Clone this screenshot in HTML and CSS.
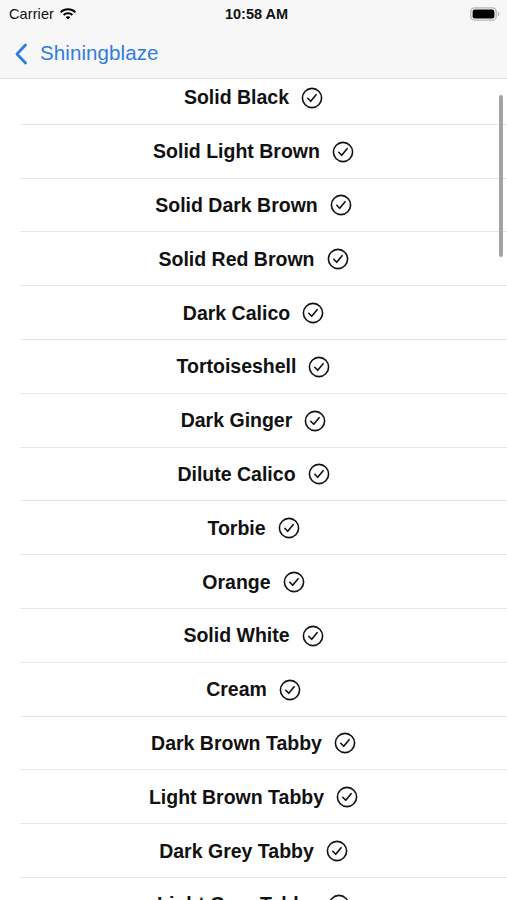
FILE: index.html
```html
<!DOCTYPE html>
<html>
<head>
<meta charset="utf-8">
<link rel="stylesheet" href="styles.css">
</head>
<body>
<div class="screen">
  <header class="header">
    <div class="status">
      <div class="status-left">
        <span class="carrier">Carrier</span>
        <svg class="wifi" width="18" height="13" viewBox="0 0 18 13">
          <path d="M9 1.2c3.1 0 5.9 1.2 8 3.2l-1.5 1.5C13.8 4.3 11.5 3.3 9 3.3S4.2 4.3 2.5 5.9L1 4.4c2.1-2 4.9-3.2 8-3.2z" fill="#000"/>
          <path d="M9 5.2c2 0 3.8.8 5.1 2l-1.5 1.5C11.6 7.8 10.4 7.3 9 7.3s-2.6.5-3.6 1.4L3.9 7.2c1.3-1.2 3.1-2 5.1-2z" fill="#000"/>
          <path d="M9 9.2c.9 0 1.700.3 2.3.9L9 12.4 6.7 10.1c.6-.6 1.4-.9 2.3-.9z" fill="#000"/>
        </svg>
      </div>
      <span class="time">10:58 AM</span>
      <div class="status-right">
        <svg width="30" height="14" viewBox="0 0 30 14">
          <rect x="0.8" y="0.8" width="25.4" height="12.4" rx="3.8" fill="none" stroke="#b5b5b5" stroke-width="1.3"/>
          <rect x="2.6" y="2.6" width="21.8" height="8.8" rx="2.2" fill="#000"/>
          <path d="M27.8 4.8c1 .3 1.6 1.1 1.6 2.2s-.6 1.9-1.6 2.2z" fill="#b5b5b5"/>
        </svg>
      </div>
    </div>
    <nav class="nav">
      <svg class="chev" width="14" height="22" viewBox="0 0 14 22">
        <path d="M11.5 2 L3 11 L11.5 20" fill="none" stroke="#2f7de1" stroke-width="2.8" stroke-linecap="round" stroke-linejoin="round"/>
      </svg>
      <span class="back-label">Shiningblaze</span>
    </nav>
  </header>
  <ul class="list">
    <li class="row"><span>Solid Black</span><svg class="check" viewBox="0 0 22 22"><circle cx="11" cy="11" r="9.6" fill="none" stroke="#111" stroke-width="1.6"/><path d="M6.8 11.3l2.9 3 5.4-6.6" fill="none" stroke="#111" stroke-width="1.6" stroke-linecap="round" stroke-linejoin="round"/></svg></li>
    <li class="row"><span>Solid Light Brown</span><svg class="check" viewBox="0 0 22 22"><circle cx="11" cy="11" r="9.6" fill="none" stroke="#111" stroke-width="1.6"/><path d="M6.8 11.3l2.9 3 5.4-6.6" fill="none" stroke="#111" stroke-width="1.6" stroke-linecap="round" stroke-linejoin="round"/></svg></li>
    <li class="row"><span>Solid Dark Brown</span><svg class="check" viewBox="0 0 22 22"><circle cx="11" cy="11" r="9.6" fill="none" stroke="#111" stroke-width="1.6"/><path d="M6.8 11.3l2.9 3 5.4-6.6" fill="none" stroke="#111" stroke-width="1.6" stroke-linecap="round" stroke-linejoin="round"/></svg></li>
    <li class="row"><span>Solid Red Brown</span><svg class="check" viewBox="0 0 22 22"><circle cx="11" cy="11" r="9.6" fill="none" stroke="#111" stroke-width="1.6"/><path d="M6.8 11.3l2.9 3 5.4-6.6" fill="none" stroke="#111" stroke-width="1.6" stroke-linecap="round" stroke-linejoin="round"/></svg></li>
    <li class="row"><span>Dark Calico</span><svg class="check" viewBox="0 0 22 22"><circle cx="11" cy="11" r="9.6" fill="none" stroke="#111" stroke-width="1.6"/><path d="M6.8 11.3l2.9 3 5.4-6.6" fill="none" stroke="#111" stroke-width="1.6" stroke-linecap="round" stroke-linejoin="round"/></svg></li>
    <li class="row"><span>Tortoiseshell</span><svg class="check" viewBox="0 0 22 22"><circle cx="11" cy="11" r="9.6" fill="none" stroke="#111" stroke-width="1.6"/><path d="M6.8 11.3l2.9 3 5.4-6.6" fill="none" stroke="#111" stroke-width="1.6" stroke-linecap="round" stroke-linejoin="round"/></svg></li>
    <li class="row"><span>Dark Ginger</span><svg class="check" viewBox="0 0 22 22"><circle cx="11" cy="11" r="9.6" fill="none" stroke="#111" stroke-width="1.6"/><path d="M6.8 11.3l2.9 3 5.4-6.6" fill="none" stroke="#111" stroke-width="1.6" stroke-linecap="round" stroke-linejoin="round"/></svg></li>
    <li class="row"><span>Dilute Calico</span><svg class="check" viewBox="0 0 22 22"><circle cx="11" cy="11" r="9.6" fill="none" stroke="#111" stroke-width="1.6"/><path d="M6.8 11.3l2.9 3 5.4-6.6" fill="none" stroke="#111" stroke-width="1.6" stroke-linecap="round" stroke-linejoin="round"/></svg></li>
    <li class="row"><span>Torbie</span><svg class="check" viewBox="0 0 22 22"><circle cx="11" cy="11" r="9.6" fill="none" stroke="#111" stroke-width="1.6"/><path d="M6.8 11.3l2.9 3 5.4-6.6" fill="none" stroke="#111" stroke-width="1.6" stroke-linecap="round" stroke-linejoin="round"/></svg></li>
    <li class="row"><span>Orange</span><svg class="check" viewBox="0 0 22 22"><circle cx="11" cy="11" r="9.6" fill="none" stroke="#111" stroke-width="1.6"/><path d="M6.8 11.3l2.9 3 5.4-6.6" fill="none" stroke="#111" stroke-width="1.6" stroke-linecap="round" stroke-linejoin="round"/></svg></li>
    <li class="row"><span>Solid White</span><svg class="check" viewBox="0 0 22 22"><circle cx="11" cy="11" r="9.6" fill="none" stroke="#111" stroke-width="1.6"/><path d="M6.8 11.3l2.9 3 5.4-6.6" fill="none" stroke="#111" stroke-width="1.6" stroke-linecap="round" stroke-linejoin="round"/></svg></li>
    <li class="row"><span>Cream</span><svg class="check" viewBox="0 0 22 22"><circle cx="11" cy="11" r="9.6" fill="none" stroke="#111" stroke-width="1.6"/><path d="M6.8 11.3l2.9 3 5.4-6.6" fill="none" stroke="#111" stroke-width="1.6" stroke-linecap="round" stroke-linejoin="round"/></svg></li>
    <li class="row"><span>Dark Brown Tabby</span><svg class="check" viewBox="0 0 22 22"><circle cx="11" cy="11" r="9.6" fill="none" stroke="#111" stroke-width="1.6"/><path d="M6.8 11.3l2.9 3 5.4-6.6" fill="none" stroke="#111" stroke-width="1.6" stroke-linecap="round" stroke-linejoin="round"/></svg></li>
    <li class="row"><span>Light Brown Tabby</span><svg class="check" viewBox="0 0 22 22"><circle cx="11" cy="11" r="9.6" fill="none" stroke="#111" stroke-width="1.6"/><path d="M6.8 11.3l2.9 3 5.4-6.6" fill="none" stroke="#111" stroke-width="1.6" stroke-linecap="round" stroke-linejoin="round"/></svg></li>
    <li class="row"><span>Dark Grey Tabby</span><svg class="check" viewBox="0 0 22 22"><circle cx="11" cy="11" r="9.6" fill="none" stroke="#111" stroke-width="1.6"/><path d="M6.8 11.3l2.9 3 5.4-6.6" fill="none" stroke="#111" stroke-width="1.6" stroke-linecap="round" stroke-linejoin="round"/></svg></li>
    <li class="row"><span>Light Grey Tabby</span><svg class="check" viewBox="0 0 22 22"><circle cx="11" cy="11" r="9.6" fill="none" stroke="#111" stroke-width="1.6"/><path d="M6.8 11.3l2.9 3 5.4-6.6" fill="none" stroke="#111" stroke-width="1.6" stroke-linecap="round" stroke-linejoin="round"/></svg></li>
  </ul>
  <div class="scrollbar"></div>
</div>
</body>
</html>
```

FILE: styles.css
```css
* { box-sizing: border-box; }
html, body {
  margin: 0;
  padding: 0;
  background: #fff;
}
body {
  font-family: "Liberation Sans", Arial, sans-serif;
  color: #000;
}
.screen {
  position: relative;
  width: 507px;
  height: 900px;
  overflow: hidden;
}
.header {
  position: relative;
  z-index: 2;
  background: #f7f7f7;
  border-bottom: 1px solid #e2e2e2;
  height: 79px;
}
.status {
  height: 28px;
  display: flex;
  align-items: center;
  justify-content: space-between;
  padding: 0 7px 0 9px;
}
.status-left {
  display: flex;
  align-items: center;
  gap: 5px;
  width: 120px;
}
.carrier {
  font-size: 14.5px;
  color: #111;
  letter-spacing: 0.1px;
}
.wifi { margin-top: -2px; }
.time {
  font-size: 14.5px;
  font-weight: bold;
  color: #111;
  margin-left: 4px;
}
.status-right {
  width: 120px;
  display: flex;
  justify-content: flex-end;
  margin-top: -1px;
}
.nav {
  height: 50px;
  display: flex;
  align-items: center;
  padding-left: 14px;
  gap: 12px;
}
.chev { margin-top: 1px; }
.back-label {
  font-size: 20.5px;
  color: #2f7de1;
  letter-spacing: 0.1px;
}
.list {
  list-style: none;
  margin: -8px 0 0 0;
  padding: 0;
}
.row {
  height: 53.8px;
  display: flex;
  align-items: center;
  justify-content: center;
  gap: 12px;
  position: relative;
  font-size: 19.5px;
  font-weight: bold;
  color: #111;
}
.row::after {
  content: "";
  position: absolute;
  left: 20px;
  right: 0;
  bottom: 0;
  height: 1px;
  background: #e6e6e6;
}
.check {
  width: 22px;
  height: 22px;
  flex: none;
}
.scrollbar {
  position: absolute;
  top: 95px;
  left: 499px;
  width: 4px;
  height: 162px;
  border-radius: 2px;
  background: #a3a3a3;
}
```
